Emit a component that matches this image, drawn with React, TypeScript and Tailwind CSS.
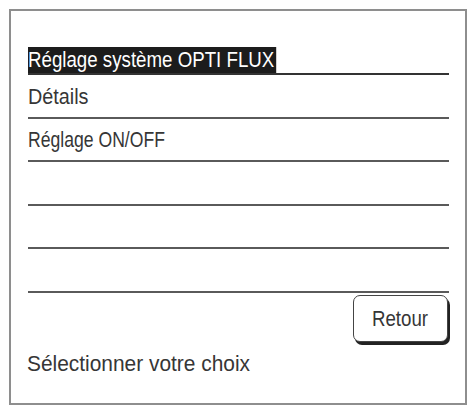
const rows = [
  { label: 'Détails', scale: 'scale-x-[0.9]' },
  { label: 'Réglage ON/OFF', scale: 'scale-x-[0.8]' },
  { label: '', scale: '' },
  { label: '', scale: '' },
  { label: '', scale: '' },
]

export default function App() {
  return (
    <div
      className="w-[471px] h-[410px] bg-white pt-[9px] pl-[9px]"
      style={{ fontFamily: '"Liberation Sans", Arial, sans-serif' }}
    >
      <div className="w-[458px] h-[396px] border-2 border-[#8e8e8e] pt-[36px] pl-[17px] pr-[16px] text-[22px] text-[#363636]">
        {/* selected row */}
        <div className="h-[28px] border-b-[2px] border-[#333] leading-[26px]">
          <span className="inline-block h-[26px] origin-left scale-x-[0.85] bg-[#1c1c1c] pr-[2px] text-white whitespace-nowrap">
            Réglage système OPTI FLUX
          </span>
        </div>

        {rows.map((row, i) => (
          <div
            key={i}
            className="h-[43.5px] border-b-[2px] border-[#5a5a5a] flex items-end pb-[7px] leading-[26px]"
          >
            {row.label && (
              <span className={`inline-block origin-left whitespace-nowrap ${row.scale}`}>
                {row.label}
              </span>
            )}
          </div>
        ))}

        <div className="flex justify-end pt-[2.5px]">
          <button className="w-[95px] h-[47px] mr-[1px] rounded-[7px] border border-[#444] bg-white shadow-[2px_3px_0_#222] flex items-center justify-center">
            <span className="inline-block scale-x-[0.85] leading-[26px] text-[#363636]">Retour</span>
          </button>
        </div>

        <div className="mt-[9px] -ml-[1px] leading-[26px] whitespace-nowrap">
          <span className="inline-block origin-left scale-x-[0.95]">Sélectionner votre choix</span>
        </div>
      </div>
    </div>
  )
}
